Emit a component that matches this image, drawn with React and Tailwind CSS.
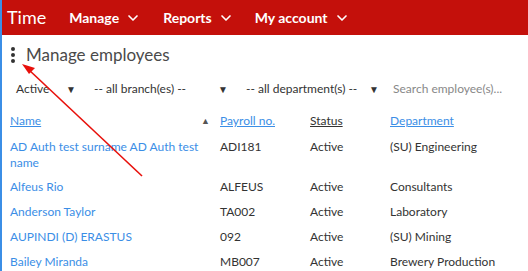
import { ChevronDown } from "lucide-react";

const rows = [
  { name: "AD Auth test surname AD Auth test name", payroll: "ADI181", status: "Active", dept: "(SU) Engineering" },
  { name: "Alfeus Rio", payroll: "ALFEUS", status: "Active", dept: "Consultants" },
  { name: "Anderson Taylor", payroll: "TA002", status: "Active", dept: "Laboratory" },
  { name: "AUPINDI (D) ERASTUS", payroll: "092", status: "Active", dept: "(SU) Mining" },
  { name: "Bailey Miranda", payroll: "MB007", status: "Active", dept: "Brewery Production" },
];

const NavItem = ({ label, className }) => (
  <div className={`flex items-center gap-[6px] text-[14px] font-bold text-white ${className}`}>
    {label}
    <ChevronDown size={16} strokeWidth={2.5} />
  </div>
);

const Select = ({ label, width }) => (
  <div className={`flex items-center justify-between ${width}`}>
    <span>{label}</span>
    <span className="text-[10px] text-[#333]">▼</span>
  </div>
);

export default function App() {
  return (
    <div
      className="relative h-[271px] w-[528px] overflow-hidden border-l-2 border-[#3b8ee6] bg-white text-[#333]"
      style={{ fontFamily: "Lato, 'Open Sans', sans-serif" }}
    >
      {/* Top bar */}
      <div className="flex h-[35px] items-center bg-[#c4100b] pl-[5px]">
        <span className="text-[18px] text-white">Time</span>
        <NavItem label="Manage" className="ml-[23px]" />
        <NavItem label="Reports" className="ml-[22px]" />
        <NavItem label="My account" className="ml-[21px]" />
      </div>

      {/* Title */}
      <div className="flex h-[40px] items-center pl-[8px]">
        <svg width="6" height="18" viewBox="0 0 6 18" className="text-[#333]">
          <circle cx="3" cy="3" r="2" fill="currentColor" />
          <circle cx="3" cy="9" r="2" fill="currentColor" />
          <circle cx="3" cy="15" r="2" fill="currentColor" />
        </svg>
        <span className="ml-[10px] text-[17px] text-[#4a4a4a]">Manage employees</span>
      </div>

      {/* Filters */}
      <div className="mt-[2px] flex h-[24px] items-center pl-[14px] text-[12px] text-[#333]">
        <Select label="Active" width="w-[60px]" />
        <div className="ml-[18px]">
          <Select label="-- all branch(es) --" width="w-[134px]" />
        </div>
        <div className="ml-[18px]">
          <Select label="-- all department(s) --" width="w-[133px]" />
        </div>
        <span className="ml-[14px] text-[#888]">Search employee(s)...</span>
      </div>

      {/* Table */}
      <table className="mt-[7px] w-full table-fixed border-collapse text-[12px]">
        <colgroup>
          <col className="w-[218px]" />
          <col className="w-[90px]" />
          <col className="w-[80px]" />
          <col />
        </colgroup>
        <thead>
          <tr className="h-[27px] text-left align-top">
            <th className="pt-[4px] pl-[8px] font-normal">
              <div className="flex items-center justify-between pr-[10px]">
                <span className="text-[#3b8ee6] underline">Name</span>
                <span className="text-[9px] text-[#555]">▲</span>
              </div>
            </th>
            <th className="pt-[4px] font-normal">
              <span className="text-[#3b8ee6] underline">Payroll no.</span>
            </th>
            <th className="pt-[4px] font-normal">
              <span className="underline">Status</span>
            </th>
            <th className="pt-[4px] font-normal">
              <span className="text-[#3b8ee6] underline">Department</span>
            </th>
          </tr>
        </thead>
        <tbody>
          {rows.map((r) => (
            <tr key={r.payroll} className="h-[25px] align-top">
              <td className="py-[4px] pl-[8px] pr-[8px] leading-[16px] text-[#3b8ee6]">{r.name}</td>
              <td className="py-[4px] leading-[16px]">{r.payroll}</td>
              <td className="py-[4px] leading-[16px]">{r.status}</td>
              <td className="py-[4px] leading-[16px]">{r.dept}</td>
            </tr>
          ))}
        </tbody>
      </table>

      {/* Annotation arrow */}
      <svg className="pointer-events-none absolute left-0 top-0" width="528" height="271">
        <line x1="140" y1="176" x2="26" y2="69" stroke="#e8100b" strokeWidth="1.6" />
        <polygon points="20,64 33,68 27,74" fill="#e8100b" />
      </svg>
    </div>
  );
}
